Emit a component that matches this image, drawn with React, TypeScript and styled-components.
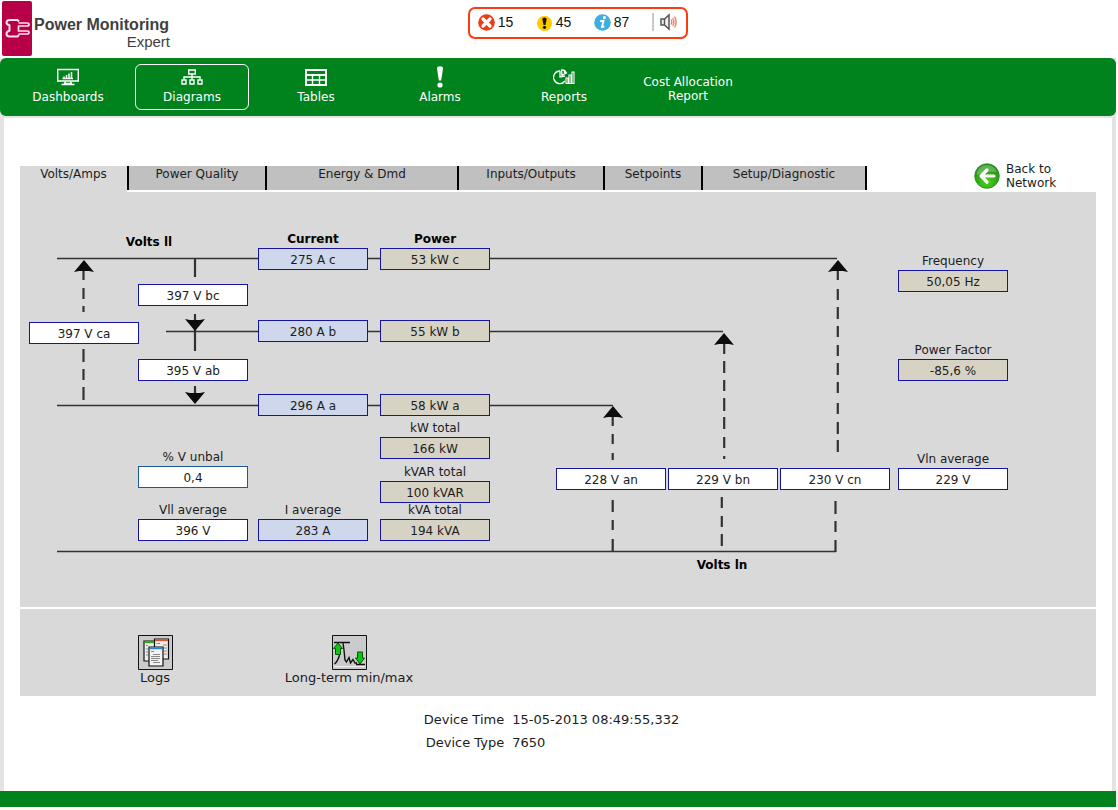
import React from 'react';
import styled, { createGlobalStyle, css } from 'styled-components';

const green = '#00821c';
const frame = '#e3e3e3';
const panel = '#d9d9d9';

const GlobalStyle = createGlobalStyle`
  *, *::before, *::after { box-sizing: border-box; }
  body {
    margin: 0;
    background: #fff;
    color: #1c1c1c;
    font: 12px/14px Verdana, "DejaVu Sans", sans-serif;
  }
  button { font: inherit; color: inherit; border: 0; padding: 0; background: none; cursor: pointer; }
  a { color: inherit; text-decoration: none; }
  svg { display: block; }
`;

const Page = styled.div`
  margin-right: 2px;
  min-width: 1100px;
`;

const Header = styled.header`
  display: flex;
  align-items: flex-start;
  height: 58px;
`;

const Brand = styled.div`
  display: flex;
  width: 42%;
  padding: 1px 0 0 2px;
`;

const BrandMark = styled.div`
  width: 30px;
  height: 55px;
  border-radius: 2px;
  background: #b70048;
`;

const BrandName = styled.h1`
  margin: 0;
  padding: 15px 0 0 2px;
  width: 140px;
  color: #3f3f3f;
  font: bold 16px/18px "Liberation Sans", Arial, sans-serif;
  white-space: nowrap;
`;

const BrandEdition = styled.span`
  display: block;
  text-align: right;
  padding-right: 2px;
  font-weight: normal;
  font-size: 15px;
  line-height: 16px;
`;

const AlertBar = styled.div`
  display: flex;
  align-items: center;
  width: 220px;
  height: 32px;
  margin: 7px 0 0 -1px;
  padding: 0 0 2px 8px;
  border: 2px solid #fb3c12;
  border-radius: 7px;
  color: #111;
  font: 14px/16px "Liberation Sans", Arial, sans-serif;
`;

const AlertCount = styled.a`
  display: flex;
  align-items: center;
  gap: 3px;
  width: 58px;
`;

const SoundButton = styled.button`
  padding-left: 6px;
  border-left: 2px solid #c9c9c9;
`;

const NavBackdrop = styled.div`
  background: ${frame};
  padding-bottom: 2px;
`;

const Nav = styled.nav`
  display: flex;
  gap: 10px;
  height: 58px;
  padding: 6px 11px;
  border-radius: 6px;
  background: ${green};
  color: #fff;
`;

const NavItem = styled.a<{ $active?: boolean }>`
  display: flex;
  flex-direction: column;
  align-items: center;
  justify-content: center;
  width: 114px;
  height: 46px;
  padding-top: 4px;
  border: 1px solid ${p => (p.$active ? '#fff' : 'transparent')};
  border-radius: 6px;
  text-align: center;
`;

const NavIconItem = styled(NavItem)`
  justify-content: flex-start;
  padding-top: 1px;
`;

const NavIcon = styled.span`
  display: flex;
  align-items: center;
  height: 22px;
  margin-bottom: 2px;
`;

const Main = styled.main`
  padding: 44px 16px 37px;
  border: solid ${frame};
  border-width: 0 4px;
`;

const TabRow = styled.div`
  display: flex;
  align-items: flex-end;
  height: 28px;
`;

const Tabs = styled.div`
  display: flex;
`;

const Tab = styled.button<{ $width: number; $active?: boolean }>`
  width: ${p => p.$width}px;
  height: 24px;
  padding: 1px 0 9px;
  border-right: 2px solid #000;
  background: ${p => (p.$active ? panel : '#c0c0c0')};
  ${p => p.$active && css`
    position: relative;
    &::after {
      content: '';
      position: absolute;
      left: 0;
      right: 0;
      top: 100%;
      height: 2px;
      background: ${panel};
    }
  `}
`;

const BackLink = styled.a`
  display: flex;
  align-items: center;
  gap: 6px;
  width: 122px;
  margin-left: auto;
`;

const Diagram = styled.section`
  position: relative;
  height: 415px;
  margin-top: 2px;
  background: ${panel};
`;

const Wiring = styled.svg`
  width: 1077px;
  height: 415px;
`;

const fills = { volts: '#fff', current: '#ced7eb', power: '#d7d3c4' };
type Kind = keyof typeof fills;

const Node = styled.div<{ $x: number; $y: number }>`
  position: absolute;
  left: ${p => p.$x}px;
  top: ${p => p.$y}px;
  width: 110px;
  text-align: center;
  white-space: nowrap;
`;

const NodeLabel = styled.label<{ $bold?: boolean }>`
  position: absolute;
  bottom: 100%;
  left: 0;
  width: 100%;
  line-height: 18px;
  color: ${p => (p.$bold ? '#000' : 'inherit')};
  font-weight: ${p => (p.$bold ? 'bold' : 'normal')};
`;

const Value = styled.output<{ $kind: Kind; $blue?: boolean }>`
  display: block;
  height: 22px;
  padding-top: 1px;
  border: 1px solid ${p => (p.$blue ? '#1d5a94' : '#1414a0')};
  background: ${p => fills[p.$kind]};
  line-height: 20px;
`;

const Caption = styled(Node)`
  color: #000;
  font-weight: bold;
`;

const ActionPanel = styled.section`
  display: flex;
  height: 87px;
  margin-top: 2px;
  padding: 26px 38px 0;
  background: ${panel};
`;

const Action = styled.button`
  display: flex;
  flex-direction: column;
  align-items: center;
  gap: 1px;
  width: 194px;
  font-size: 13px;
`;

const DeviceInfo = styled.dl`
  display: grid;
  grid-template-columns: 45% 1fr;
  column-gap: 8px;
  margin: 12px 0 0;
  font-size: 13px;
  line-height: 23px;
`;

const Term = styled.dt`
  text-align: right;
`;

const Detail = styled.dd`
  margin: 0;
`;

const Footer = styled.footer`
  height: 16px;
  background: ${green};
`;

const PlugIcon = () => (
  <svg width="30" height="55" viewBox="0 0 30 55" fill="none" stroke="#f9e4ec" strokeLinejoin="round">
    <path d="M17 20.500 L15.500 19 H7.500 Q4.500 19 4.500 21.800 Q4.500 23.500 7.500 24.300 V29.700 Q4.500 30.500 4.500 32.700 Q4.500 35.500 7.500 35.500 H15.500 L17 34" strokeWidth="2" />
    <path d="M16.500 22 H25 Q27 22 27 23.500 Q27 25 25 25 H16.500 V30 H25 Q27 30 27 31.500 Q27 33 25 33 H16.500" strokeWidth="1.700" />
  </svg>
);

const ErrorIcon = () => (
  <svg width="17" height="17" viewBox="0 0 17 17">
    <circle cx="8.500" cy="8.500" r="8.300" fill="#f23a10" />
    <path d="M5 5 L12 12 M12 5 L5 12" stroke="#fff" strokeWidth="3.200" strokeLinecap="round" />
  </svg>
);

const WarningIcon = () => (
  <svg width="17" height="17" viewBox="0 0 17 17">
    <circle cx="8.500" cy="9.300" r="7.600" fill="#fc0" />
    <path d="M6.300 5 Q6.300 3.500 8.500 3.500 Q10.700 3.500 10.700 5 L9.500 11 H7.500 Z" fill="#1c1800" />
    <circle cx="8.500" cy="13.300" r="1.600" fill="#1c1800" />
  </svg>
);

const InfoIcon = () => (
  <svg width="17" height="17" viewBox="0 0 17 17">
    <circle cx="8.500" cy="8.500" r="8.300" fill="#3eaee2" />
    <circle cx="10.400" cy="3.700" r="1.600" fill="#fff" />
    <path d="M6 7.300 L9.600 6.800 L7.800 13.200 L10.300 12.500" fill="none" stroke="#fff" strokeWidth="1.900" strokeLinejoin="round" />
  </svg>
);

const SpeakerIcon = () => (
  <svg width="18" height="18" viewBox="0 0 18 18" fill="none">
    <path d="M1 6 H4.500 L9 2 V16 L4.500 12 H1 Z M4.500 6 V12" stroke="#555" strokeWidth="1.500" fill="#f2f2f2" />
    <path d="M11 6.500 Q12.500 9 11 11.500 M12.700 5 Q15 9 12.700 13 M14.500 3.500 Q17.800 9 14.500 14.500" stroke="#f47c62" strokeWidth="1.400" />
  </svg>
);

const DashboardIcon = () => (
  <svg width="22" height="18" viewBox="0 0 22 18" fill="none" stroke="#fff">
    <path d="M.7 1.500 H21.300 V13 H.7 Z" strokeWidth="1.500" />
    <path d="M7 10.500 V8.500 M9.500 10.500 V7 M12 10.500 V5.500 M14.500 10.500 V4" strokeWidth="1.500" />
    <path d="M5.500 10.500 H16 M8.500 13.500 L7.500 15.500 H14.500 L13.500 13.500 M4.500 16.500 H17.500" strokeWidth="1.400" />
  </svg>
);

const DiagramIcon = () => (
  <svg width="22" height="16" viewBox="0 0 22 16" fill="none" stroke="#fff" strokeWidth="1.400">
    <path d="M7.700 1 H14.300 V5 H7.700 Z M11 5 V11 M3 11 V8 H19 V11 M1 11 H5 V15 H1 Z M9 11 H13 V15 H9 Z M17 11 H21 V15 H17 Z" />
  </svg>
);

const TableIcon = () => (
  <svg width="22" height="17" viewBox="0 0 22 17" fill="none" stroke="#fff">
    <path d="M1 1 H21 V16 H1 Z M1 6 H21" strokeWidth="1.900" />
    <path d="M1 11 H21 M7.500 6 V16 M14.500 6 V16" strokeWidth="1.400" />
  </svg>
);

const AlarmIcon = () => (
  <svg width="8" height="22" viewBox="0 0 8 22" fill="#fff">
    <path d="M1 2.500 Q1 .3 4 .3 Q7 .3 7 2.500 L5.200 14.500 H2.800 Z" />
    <circle cx="4" cy="19" r="2.600" />
  </svg>
);

const ReportIcon = () => (
  <svg width="22" height="16" viewBox="0 0 22 16" fill="none" stroke="#fff" strokeWidth="1.300">
    <path d="M7 2 A6.300 6.300 0 1 0 12 12 M7 2 V8 L12 7 M8.500 1 Q11.500 .5 13.500 4 L9 6 Z M11 1 L12 5" />
    <path d="M13 14.500 V9 H15 V14.500 Z M16 14.500 V6 H18 V14.500 Z M19 14.500 V3 H21 V14.500 Z" strokeWidth="1.100" />
  </svg>
);

const BackIcon = () => (
  <svg width="26" height="26" viewBox="0 0 26 26">
    <defs>
      <radialGradient id="ball" cx="50%" cy="75%" r="70%">
        <stop offset="0" stopColor="#4fd01c" />
        <stop offset=".6" stopColor="#2fa717" />
        <stop offset="1" stopColor="#278f1c" />
      </radialGradient>
    </defs>
    <circle cx="13" cy="13" r="12.300" fill="url(#ball)" stroke="#268a1e" strokeWidth=".8" />
    <path d="M3 9 Q6 2 13 2 Q20 2 23 9 Q13 7 3 12 Z" fill="#fff" opacity=".25" />
    <path d="M20 13 H7.500 M13 7 L7 13 L13 19" fill="none" stroke="#fff" strokeWidth="3.200" strokeLinecap="round" strokeLinejoin="round" />
  </svg>
);

const LogsIcon = () => (
  <svg width="35" height="35" viewBox="0 0 35 35">
    <path d="M.5 .5 H34.500 V34.500 H.5 Z" fill="#cbcbcb" stroke="#111" />
    <g fill="#ededed" stroke="#111" strokeWidth="1.200">
      <path d="M6 6 H19 V26 H6 Z" />
      <path d="M16.500 4 H30.500 V24 H16.500 Z" />
    </g>
    <path d="M6.500 7.300 H16" stroke="#3a1" strokeWidth="1.800" />
    <path d="M17 5.300 H30" stroke="#d8592b" strokeWidth="1.800" />
    <path d="M18.500 8.500 H22 M25 10 H29 M25 13 H29 M26 16 H29 M26 19 H29 M8 10.500 H10 M8 14 H10 M8 17 H10 M8 20 H10" stroke="#888" />
    <path d="M11 12 H25 V31 H11 Z" fill="#f2f2f2" stroke="#111" strokeWidth="1.200" />
    <path d="M11.500 13.300 H24.500" stroke="#2a86cc" strokeWidth="1.800" />
    <path d="M13 16.500 H16 M15 19.500 H22 M13 21.500 H22 M13 23.500 H22 M13 25.500 H20 M15 27.500 H22" stroke="#888" />
  </svg>
);

const TrendIcon = () => (
  <svg width="35" height="35" viewBox="0 0 35 35">
    <path d="M.5 .5 H34.500 V34.500 H.5 Z" fill="#cbcbcb" stroke="#111" />
    <path d="M2 7.500 H18 M2.500 29 Q6 26 7.500 20 M11 8 L12 15 L13 25 L14.500 27 L17 22.500 L18.500 28 L21 24.500 L23 28 H25 M24 29.500 H33" fill="none" stroke="#111" strokeWidth="1.400" />
    <path d="M2 31.500 H33" stroke="#eee" />
    <path d="M6 8 L10.500 13.500 H8.500 V19.500 H3.500 V13.500 H1.500 Z M25.500 17 H30.500 V23 H32.500 L28 29 L23.500 23 H25.500 Z" fill="#0fc413" stroke="#075307" />
  </svg>
);

/* Vertical strokes of the wiring: x position followed by [from, to] pairs. */
const strokes: [number, [number, number][]][] = [
  [63.5, [[76, 88], [96, 107], [114, 120], [157, 170], [177, 188], [195, 208]]],
  [175, [[66, 85], [122, 159], [194, 202]]],
  [592.7, [[220, 234], [242, 252], [261, 268], [308, 320], [328, 338], [347, 359]]],
  [704.2, [[150, 162], [169, 181], [188, 199], [206, 219], [225, 237], [245, 256], [264, 267]]],
  [701.8, [[305, 316], [324, 335], [342, 354]]],
  [817.8, [[76, 88], [97, 108], [115, 127], [134, 145], [153, 164], [171, 183], [190, 201], [211, 222], [230, 242], [248, 260]]],
  [815.5, [[309, 322], [329, 340], [348, 360]]],
];

const wires: [number, number, number][] = [
  [37, 66.5, 817],
  [146, 139.5, 703],
  [37, 213.5, 593],
  [37, 359.5, 816],
];

const arrows: [number, number, 1 | -1][] = [
  [64, 68, 1],
  [175, 139, -1],
  [175, 212, -1],
  [593, 214, 1],
  [704, 141, 1],
  [818, 68, 1],
];

type Reading = { id: string; x: number; y: number; value: string; kind: Kind; label?: string; bold?: boolean; blue?: boolean };

const readings: Reading[] = [
  { id: 'ic', x: 238, y: 56, value: '275 A c', kind: 'current', label: 'Current', bold: true },
  { id: 'pc', x: 360, y: 56, value: '53 kW c', kind: 'power', label: 'Power', bold: true },
  { id: 'vbc', x: 118, y: 92, value: '397 V bc', kind: 'volts' },
  { id: 'vca', x: 9, y: 130, value: '397 V ca', kind: 'volts' },
  { id: 'ib', x: 238, y: 128, value: '280 A b', kind: 'current' },
  { id: 'pb', x: 360, y: 128, value: '55 kW b', kind: 'power' },
  { id: 'vab', x: 118, y: 167, value: '395 V ab', kind: 'volts' },
  { id: 'ia', x: 238, y: 202, value: '296 A a', kind: 'current' },
  { id: 'pa', x: 360, y: 202, value: '58 kW a', kind: 'power' },
  { id: 'kw', x: 360, y: 245, value: '166 kW', kind: 'power', label: 'kW total' },
  { id: 'kvar', x: 360, y: 289, value: '100 kVAR', kind: 'power', label: 'kVAR total' },
  { id: 'kva', x: 360, y: 327, value: '194 kVA', kind: 'power', label: 'kVA total' },
  { id: 'unbal', x: 118, y: 274, value: '0,4', kind: 'volts', label: '% V unbal', blue: true },
  { id: 'vll', x: 118, y: 327, value: '396 V', kind: 'volts', label: 'Vll average' },
  { id: 'iavg', x: 238, y: 327, value: '283 A', kind: 'current', label: 'I average' },
  { id: 'van', x: 536, y: 276, value: '228 V an', kind: 'volts' },
  { id: 'vbn', x: 648, y: 276, value: '229 V bn', kind: 'volts' },
  { id: 'vcn', x: 760, y: 276, value: '230 V cn', kind: 'volts' },
  { id: 'freq', x: 878, y: 78, value: '50,05 Hz', kind: 'power', label: 'Frequency' },
  { id: 'pf', x: 878, y: 167, value: '-85,6 %', kind: 'power', label: 'Power Factor' },
  { id: 'vln', x: 878, y: 276, value: '229 V', kind: 'volts', label: 'Vln average' },
];

const tabs: [string, number][] = [
  ['Volts/Amps', 109],
  ['Power Quality', 138],
  ['Energy & Dmd', 192],
  ['Inputs/Outputs', 146],
  ['Setpoints', 98],
  ['Setup/Diagnostic', 164],
];

const sections: [string, React.ReactNode][] = [
  ['Dashboards', <DashboardIcon />],
  ['Diagrams', <DiagramIcon />],
  ['Tables', <TableIcon />],
  ['Alarms', <AlarmIcon />],
  ['Reports', <ReportIcon />],
];

export default function App() {
  return (
    <Page>
      <GlobalStyle />
      <Header>
        <Brand>
          <BrandMark><PlugIcon /></BrandMark>
          <BrandName>Power Monitoring <BrandEdition>Expert</BrandEdition></BrandName>
        </Brand>
        <AlertBar>
          <AlertCount href="#errors"><ErrorIcon />15</AlertCount>
          <AlertCount href="#warnings"><WarningIcon />45</AlertCount>
          <AlertCount href="#notices"><InfoIcon />87</AlertCount>
          <SoundButton aria-label="Sound"><SpeakerIcon /></SoundButton>
        </AlertBar>
      </Header>
      <NavBackdrop>
        <Nav>
          {sections.map(([name, icon]) => (
            <NavIconItem key={name} href={`#${name}`} $active={name === 'Diagrams'}>
              <NavIcon>{icon}</NavIcon>
              {name}
            </NavIconItem>
          ))}
          <NavItem href="#cost">Cost Allocation Report</NavItem>
        </Nav>
      </NavBackdrop>
      <Main>
        <TabRow>
          <Tabs role="tablist">
            {tabs.map(([name, width], i) => (
              <Tab key={name} role="tab" aria-selected={i === 0} $width={width} $active={i === 0}>{name}</Tab>
            ))}
          </Tabs>
          <BackLink href="#network">
            <BackIcon />
            <span>Back to<br />Network</span>
          </BackLink>
        </TabRow>
        <Diagram>
          <Wiring viewBox="0 0 1077 415" fill="none" stroke="#333">
            {wires.map(([x1, y, x2]) => (
              <path key={y} d={`M${x1} ${y} H${x2}`} strokeWidth="1.500" />
            ))}
            {strokes.map(([x, parts]) => (
              <path key={x} d={parts.map(([a, b]) => `M${x} ${a} V${b}`).join(' ')} strokeWidth="2.200" />
            ))}
            {arrows.map(([x, y, dir]) => (
              <path
                key={`${x}-${y}`}
                d={`M${x} ${y} L${x + 10} ${y + 12 * dir} L${x + 5} ${y + 11 * dir} H${x - 5} L${x - 10} ${y + 12 * dir} Z`}
                fill="#0c0c0c"
                stroke="none"
              />
            ))}
          </Wiring>
          <Caption $x={74} $y={43}>Volts ll</Caption>
          <Caption $x={647} $y={366}>Volts ln</Caption>
          {readings.map(r => (
            <Node key={r.id} $x={r.x} $y={r.y}>
              {r.label && <NodeLabel htmlFor={r.id} $bold={r.bold}>{r.label}</NodeLabel>}
              <Value id={r.id} $kind={r.kind} $blue={r.blue}>{r.value}</Value>
            </Node>
          ))}
        </Diagram>
        <ActionPanel>
          <Action><LogsIcon />Logs</Action>
          <Action><TrendIcon />Long-term min/max</Action>
        </ActionPanel>
        <DeviceInfo>
          <Term>Device Time</Term>
          <Detail>15-05-2013 08:49:55,332</Detail>
          <Term>Device Type</Term>
          <Detail>7650</Detail>
        </DeviceInfo>
      </Main>
      <Footer />
    </Page>
  );
}
